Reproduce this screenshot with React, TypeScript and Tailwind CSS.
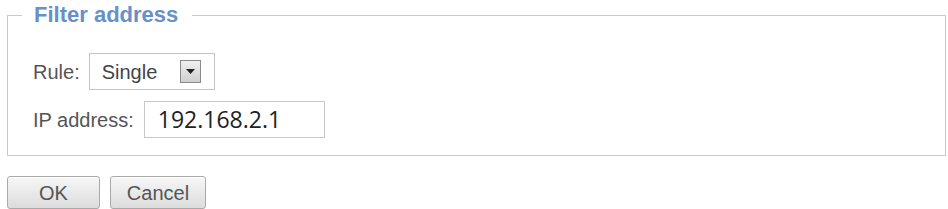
function DropButton() {
  return (
    <span className="flex h-[23px] w-[21px] items-center justify-center border border-[#8a8a8a] bg-gradient-to-b from-[#f0f0f0] to-[#cfcfcf]">
      <svg width="9" height="5" viewBox="0 0 9 5">
        <path d="M0 0h9L4.5 5z" fill="#222" />
      </svg>
    </span>
  )
}

function Button({ label, width }: { label: string; width: string }) {
  return (
    <button
      className={`h-[33px] ${width} rounded-[3px] border border-[#a9a9a9] bg-gradient-to-b from-[#f7f7f7] to-[#dcdcdc] text-[20px] text-[#555] shadow-[inset_0_1px_0_#fff]`}
    >
      {label}
    </button>
  )
}

export default function App() {
  return (
    <div className="h-[209px] w-[948px] overflow-hidden bg-white font-['Liberation_Sans',Arial,sans-serif]">
      {/* Filter address group */}
      <fieldset className="ml-[7px] mr-[2px] mt-[2px] border border-[#c9c9c9] px-[14px] pb-[17px]">
        <legend className="pl-[12px] pr-[14px] text-[22px] font-bold leading-[26px] text-[#6790c8]">
          Filter address
        </legend>

        <div className="mt-[25px] flex flex-col gap-[11px] pl-[11px]">
          <div className="flex items-center">
            <span className="text-[20px] text-[#555]">Rule:</span>
            <div className="ml-[9px] flex h-[37px] w-[126px] items-center justify-between border border-[#c4c4c4] pl-[12px] pr-[13px]">
              <span className="text-[20px] text-[#444]">Single</span>
              <DropButton />
            </div>
          </div>

          <div className="flex items-center">
            <span className="text-[20px] text-[#555]">IP address:</span>
            <div className="ml-[10px] flex h-[37px] w-[181px] items-center border border-[#c8c8c8] pl-[13px]">
              <span className="font-['Open_Sans',sans-serif] text-[23px] text-[#222]">192.168.2.1</span>
            </div>
          </div>
        </div>
      </fieldset>

      <div className="ml-[7px] mt-[20px] flex gap-[10px]">
        <Button label="OK" width="w-[93px]" />
        <Button label="Cancel" width="w-[96px]" />
      </div>
    </div>
  )
}
